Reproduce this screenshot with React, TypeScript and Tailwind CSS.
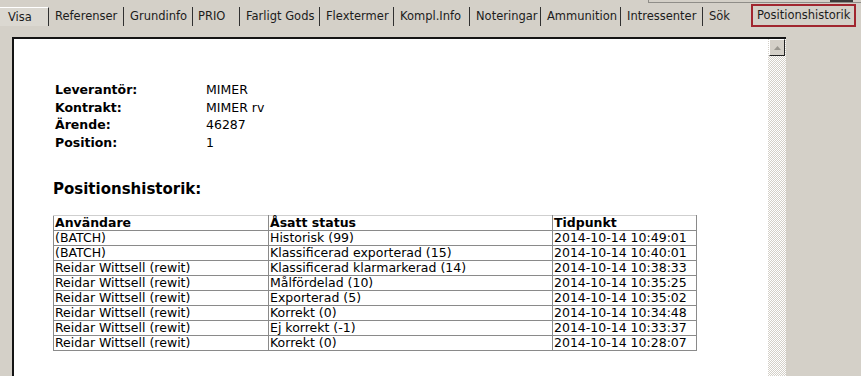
import React from 'react';

const tabs = [
  { label: 'Visa', w: 'w-[49px]', pl: 'pl-[8px]' },
  { label: 'Referenser', w: 'w-[75px]', pl: 'pl-[6px]' },
  { label: 'Grundinfo', w: 'w-[69px]', pl: 'pl-[6px]' },
  { label: 'PRIO', w: 'w-[47px]', pl: 'pl-[5px]' },
  { label: 'Farligt Gods', w: 'w-[80px]', pl: 'pl-[6px]' },
  { label: 'Flextermer', w: 'w-[74px]', pl: 'pl-[6px]' },
  { label: 'Kompl.Info', w: 'w-[76px]', pl: 'pl-[6px]' },
  { label: 'Noteringar', w: 'w-[71px]', pl: 'pl-[6px]' },
  { label: 'Ammunition', w: 'w-[80px]', pl: 'pl-[6px]' },
  { label: 'Intressenter', w: 'w-[82px]', pl: 'pl-[6px]' },
];

const info = [
  ['Leverantör:', 'MIMER'],
  ['Kontrakt:', 'MIMER rv'],
  ['Ärende:', '46287'],
  ['Position:', '1'],
];

const rows = [
  ['(BATCH)', 'Historisk (99)', '2014-10-14 10:49:01'],
  ['(BATCH)', 'Klassificerad exporterad (15)', '2014-10-14 10:40:01'],
  ['Reidar Wittsell (rewit)', 'Klassificerad klarmarkerad (14)', '2014-10-14 10:38:33'],
  ['Reidar Wittsell (rewit)', 'Målfördelad (10)', '2014-10-14 10:35:25'],
  ['Reidar Wittsell (rewit)', 'Exporterad (5)', '2014-10-14 10:35:02'],
  ['Reidar Wittsell (rewit)', 'Korrekt (0)', '2014-10-14 10:34:48'],
  ['Reidar Wittsell (rewit)', 'Ej korrekt (-1)', '2014-10-14 10:33:37'],
  ['Reidar Wittsell (rewit)', 'Korrekt (0)', '2014-10-14 10:28:07'],
];

const App = () => {
  return (
    <div className="relative w-[861px] h-[376px] overflow-hidden bg-[#d4d0c8] font-['DejaVu_Sans',Verdana,sans-serif] text-black">
      {/* box edge peeking in at the top */}
      <div className="absolute left-[648px] top-0 w-[213px] h-[3px] border-l border-b border-[#8f8d88]" />
      <div className="absolute left-[830px] top-0 w-[23px] h-[2px] bg-[#3a3a3a]" />

      {/* Tab strip */}
      <div className="flex items-start h-[37px] pt-[4px] text-[11.5px] text-[#1c1c1c]">
        <div className="flex mt-[3px] h-[19px]">
          {tabs.map((t, i) => (
            <div
              key={t.label}
              className={`${t.w} ${t.pl} h-[19px] leading-[18px] whitespace-nowrap border-r border-[#303030] ${i === 0 ? 'border-t border-t-white bg-[#dbd8d1]' : ''}`}
            >
              {t.label}
            </div>
          ))}
          <div className="w-[48px] h-[19px] leading-[18px] pl-[6px]">Sök</div>
        </div>
        <div className="w-[105px] h-[23px] border-2 border-[#a1262f] pl-[4px] leading-[19px] whitespace-nowrap">
          Positionshistorik
        </div>
      </div>

      {/* Content panel */}
      <div className="ml-[12px] w-[774px] h-[345px] border-t-2 border-l-2 border-[#141414] bg-white flex">
        <div className="flex-1 pt-[42px] pl-[39px] text-[12.5px]">
          <div className="pl-[2px]">
            {info.map(([k, v]) => (
              <div key={k} className="flex leading-[17.5px]">
                <div className="w-[151px] font-bold">{k}</div>
                <div>{v}</div>
              </div>
            ))}
          </div>

          <h3 className="mt-[29px] text-[15px] font-bold leading-[18px]">Positionshistorik:</h3>

          <table className="mt-[17px] border-collapse w-[644px] leading-[14px]">
            <thead>
              <tr className="font-bold text-left">
                <th className="w-[215px] border border-[#8a8a8a] border-t-[#cfcfcf] px-[1px] font-bold">Användare</th>
                <th className="w-[284px] border border-[#8a8a8a] border-t-[#cfcfcf] px-[1px] font-bold">Åsatt status</th>
                <th className="border border-[#8a8a8a] border-t-[#cfcfcf] px-[1px] font-bold">Tidpunkt</th>
              </tr>
            </thead>
            <tbody>
              {rows.map((r, i) => (
                <tr key={i}>
                  {r.map((c, j) => (
                    <td key={j} className="border border-[#8a8a8a] px-[1px] whitespace-nowrap">
                      {c}
                    </td>
                  ))}
                </tr>
              ))}
            </tbody>
          </table>
        </div>

        {/* Scrollbar */}
        <div className="w-[18px] h-full bg-[repeating-conic-gradient(#ffffff_0%_25%,#d4d0c8_0%_50%)] bg-size-[2px_2px]">
          <div className="ml-[1px] w-[16px] h-[17px] bg-[#d4d0c8] border-t border-l border-t-white border-l-white border-b border-r border-b-[#222] border-r-[#222] flex items-center justify-center">
            <svg width="7" height="4" viewBox="0 0 7 4">
              <polygon points="3.5,0 7,4 0,4" fill="#9a978f" />
            </svg>
          </div>
        </div>
      </div>
    </div>
  );
};

export default App;
